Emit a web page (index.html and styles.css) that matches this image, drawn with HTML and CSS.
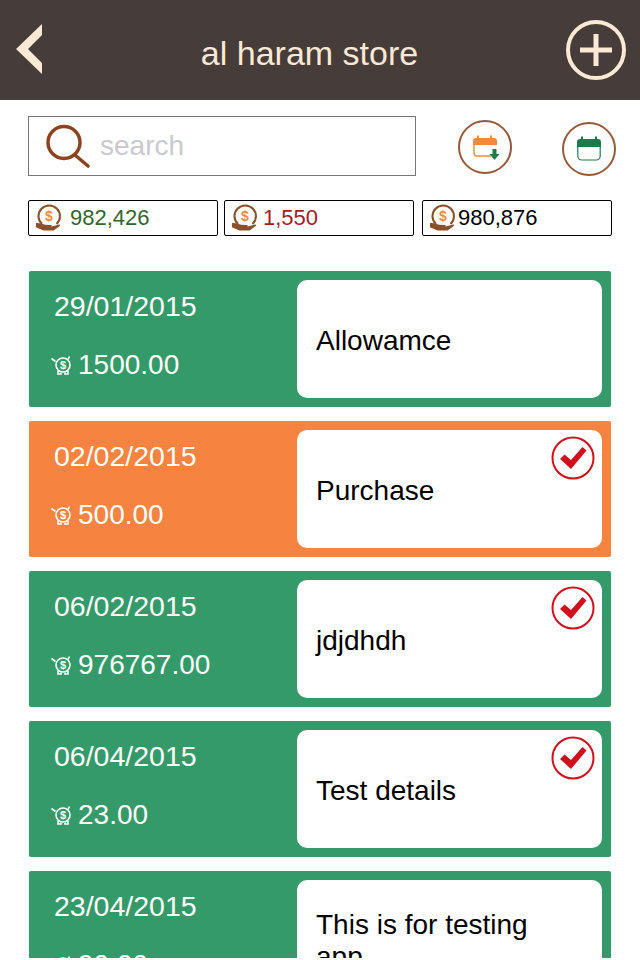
FILE: index.html
```html
<!DOCTYPE html>
<html lang="en">
<head>
<meta charset="utf-8">
<title>al haram store</title>
<link rel="stylesheet" href="styles.css">
</head>
<body>
<svg class="defs" width="0" height="0" aria-hidden="true">
  <symbol id="coin" viewBox="0 0 30 30">
    <path d="M7.500 21.500A11.500 11.500 0 1 1 23 21.500" fill="none" stroke="#8a4f2b" stroke-width="2.200"/>
    <text x="15" y="18.500" text-anchor="middle" class="coin-s">$</text>
    <path d="M1 20.500c4-.6 7 1.500 10 1.700l6 .2c1.500.2 1.300 1.500 0 1.600h-4l5 .2 8-2.200c1.300 0 1.500 1 .5 1.600L20 28.500H9L1 25z" fill="#8a4f2b"/>
  </symbol>
  <symbol id="pig" viewBox="0 0 24 24">
    <g fill="none" stroke="#fff">
      <circle cx="13" cy="12" r="7" stroke-width="1.600"/>
      <path d="M1.500 5.500l4 3M8 17.500V21h3v-1.500M15 19.500V21h3v-3.500M19.500 3.500l-1.500 3" stroke-width="1.600"/>
    </g>
    <text x="13" y="15.800" text-anchor="middle" class="pig-s">$</text>
  </symbol>
  <symbol id="check" viewBox="0 0 44 44">
    <circle cx="22" cy="22" r="20.500" fill="#fff" stroke="#d0101c" stroke-width="2"/>
    <path d="M9 23l4.500-4.500 6.500 5.500L31.500 11l4 3.500L20 33z" fill="#d0101c"/>
  </symbol>
</svg>

<div class="app">
  <header class="topbar">
    <svg class="back" viewBox="0 0 26 50" aria-label="Back"><path d="M26 0v11L12 25l14 14v11L0 25z" fill="#fbe8d5"/></svg>
    <h1 class="title">al haram store</h1>
    <svg class="add" viewBox="0 0 60 60" aria-label="Add">
      <circle cx="30" cy="30" r="28" fill="none" stroke="#fbe8d5" stroke-width="4"/>
      <path d="M14 27.500h32v5H14zM27.500 14h5v32h-5z" fill="#fbe8d5"/>
    </svg>
  </header>

  <section class="tools">
    <div class="search">
      <svg class="search-icon" viewBox="0 0 46 44"><circle cx="19" cy="18.500" r="16" fill="none" stroke="#8a4420" stroke-width="3.500"/><path d="M30 31l13 11" stroke="#8a4420" stroke-width="3.500" stroke-linecap="round"/></svg>
      <span class="search-text">search</span>
    </div>
    <svg class="cal cal-a" viewBox="0 0 54 54">
      <circle cx="27" cy="27" r="26" fill="#fff" stroke="#96593a" stroke-width="2"/>
      <path d="M17 18h19a3 3 0 0 1 3 3v4H15v-4a3 3 0 0 1 2-3zM19 15.500h2V19h-2zM32 15.500h2V19h-2z" fill="#f28a3d"/>
      <path d="M16 25v8a3 3 0 0 0 3 3h14" fill="none" stroke="#f28a3d" stroke-width="1.400"/>
      <path d="M34.500 29h4v5h3l-5 6-5-6h3z" fill="#1e7a45"/>
    </svg>
    <svg class="cal cal-b" viewBox="0 0 54 54">
      <circle cx="27" cy="27" r="26" fill="#fff" stroke="#96593a" stroke-width="2"/>
      <path d="M18 17h18a3 3 0 0 1 3 3v5H15v-5a3 3 0 0 1 3-3zM19 14.500h2V18h-2zM33 14.500h2V18h-2z" fill="#1e7a4a"/>
      <path d="M15.800 25v9a4 4 0 0 0 4 4h14.400a4 4 0 0 0 4-4v-9" fill="none" stroke="#1e7a4a" stroke-width="1.200"/>
    </svg>
  </section>

  <section class="totals">
    <div class="total"><svg class="coin"><use href="#coin"/></svg><span class="amt amt-in">982,426</span></div>
    <div class="total"><svg class="coin"><use href="#coin"/></svg><span class="amt amt-out">1,550</span></div>
    <div class="total total-net"><svg class="coin"><use href="#coin"/></svg><span class="amt">980,876</span></div>
  </section>

  <main class="list">
    <article class="row">
      <div class="info"><div class="date">29/01/2015</div><div class="price"><svg class="pig"><use href="#pig"/></svg>1500.00</div></div>
      <div class="card"><p class="desc">Allowamce</p></div>
    </article>
    <article class="row row-orange">
      <div class="info"><div class="date">02/02/2015</div><div class="price"><svg class="pig"><use href="#pig"/></svg>500.00</div></div>
      <div class="card"><p class="desc">Purchase</p><svg class="check"><use href="#check"/></svg></div>
    </article>
    <article class="row">
      <div class="info"><div class="date">06/02/2015</div><div class="price"><svg class="pig"><use href="#pig"/></svg>976767.00</div></div>
      <div class="card"><p class="desc">jdjdhdh</p><svg class="check"><use href="#check"/></svg></div>
    </article>
    <article class="row">
      <div class="info"><div class="date">06/04/2015</div><div class="price"><svg class="pig"><use href="#pig"/></svg>23.00</div></div>
      <div class="card"><p class="desc">Test details</p><svg class="check"><use href="#check"/></svg></div>
    </article>
    <article class="row">
      <div class="info"><div class="date">23/04/2015</div><div class="price"><svg class="pig"><use href="#pig"/></svg>90.00</div></div>
      <div class="card"><p class="desc">This is for testing app</p></div>
    </article>
  </main>
</div>
</body>
</html>
```
FILE: styles.css
```css
* { box-sizing: border-box; }
html, body { margin: 0; padding: 0; background: #fff; }
body { font-family: "Liberation Sans", Arial, sans-serif; }
.defs { position: absolute; }
.coin-s { font: bold 15px "Liberation Sans", sans-serif; fill: #f08a3c; }
.pig-s { font: bold 11px "Liberation Sans", sans-serif; fill: #fff; }

.app { width: 640px; height: 958px; overflow: hidden; background: #fff; }

.topbar {
  height: 100px;
  background: #463c39;
  display: flex;
  align-items: center;
  justify-content: space-between;
  padding: 0 14px 0 16px;
}
.back { width: 26px; height: 50px; flex: none; margin-top: -2px; }
.add { width: 60px; height: 60px; flex: none; }
.title {
  margin: 0;
  flex: 1;
  text-align: center;
  font-size: 34px;
  font-weight: 400;
  color: #fbe8d5;
  padding: 6px 0 0 11px;
}

.tools { display: flex; align-items: flex-start; height: 100px; padding: 16px 0 0 28px; }
.search {
  width: 388px;
  height: 60px;
  border: 1px solid #777;
  display: flex;
  align-items: center;
  padding-left: 16px;
}
.search-icon { width: 46px; height: 44px; flex: none; margin-right: 9px; }
.search-text { font-size: 28px; color: #c9c9ce; }
.cal { width: 54px; height: 54px; flex: none; }
.cal-a { margin: 4px 0 0 42px; }
.cal-b { margin: 6px 0 0 50px; }

.totals { display: flex; padding-left: 28px; height: 36px; }
.total {
  width: 190px;
  height: 36px;
  border: 1px solid #000;
  border-radius: 2px;
  display: flex;
  align-items: center;
  padding-left: 6px;
  margin-right: 6px;
}
.total-net { margin-left: 2px; }
.coin { width: 28px; height: 28px; flex: none; margin-right: 7px; }
.amt { font-size: 22px; color: #000; }
.amt-in { color: #33662e; }
.amt-out { color: #a21d1d; margin-left: -3px; }
.total-net .amt { margin-left: -6px; }

.list { padding: 35px 29px 0; display: flex; flex-direction: column; gap: 14px; }
.row {
  flex: none;
  height: 136px;
  border-radius: 2px;
  background: #359a69;
  display: flex;
  padding: 9px 9px 9px 0;
}
.row-orange { background: #f6833f; }
.info { width: 268px; flex: none; color: #fff; padding: 9px 0 0 25px; }
.date { font-size: 28.500px; line-height: 34px; }
.price { display: flex; align-items: center; font-size: 28px; line-height: 34px; margin: 25px 0 0 -4px; }
.pig { width: 24px; height: 24px; flex: none; margin-right: 4px; }
.card {
  flex: 1;
  position: relative;
  background: #fff;
  border-radius: 10px;
  display: flex;
  align-items: center;
  padding: 3px 19px 0;
}
.desc { margin: 0; max-width: 240px; font-size: 28px; line-height: 32px; color: #000; }
.check { position: absolute; top: 6px; right: 7px; width: 44px; height: 44px; }
```
